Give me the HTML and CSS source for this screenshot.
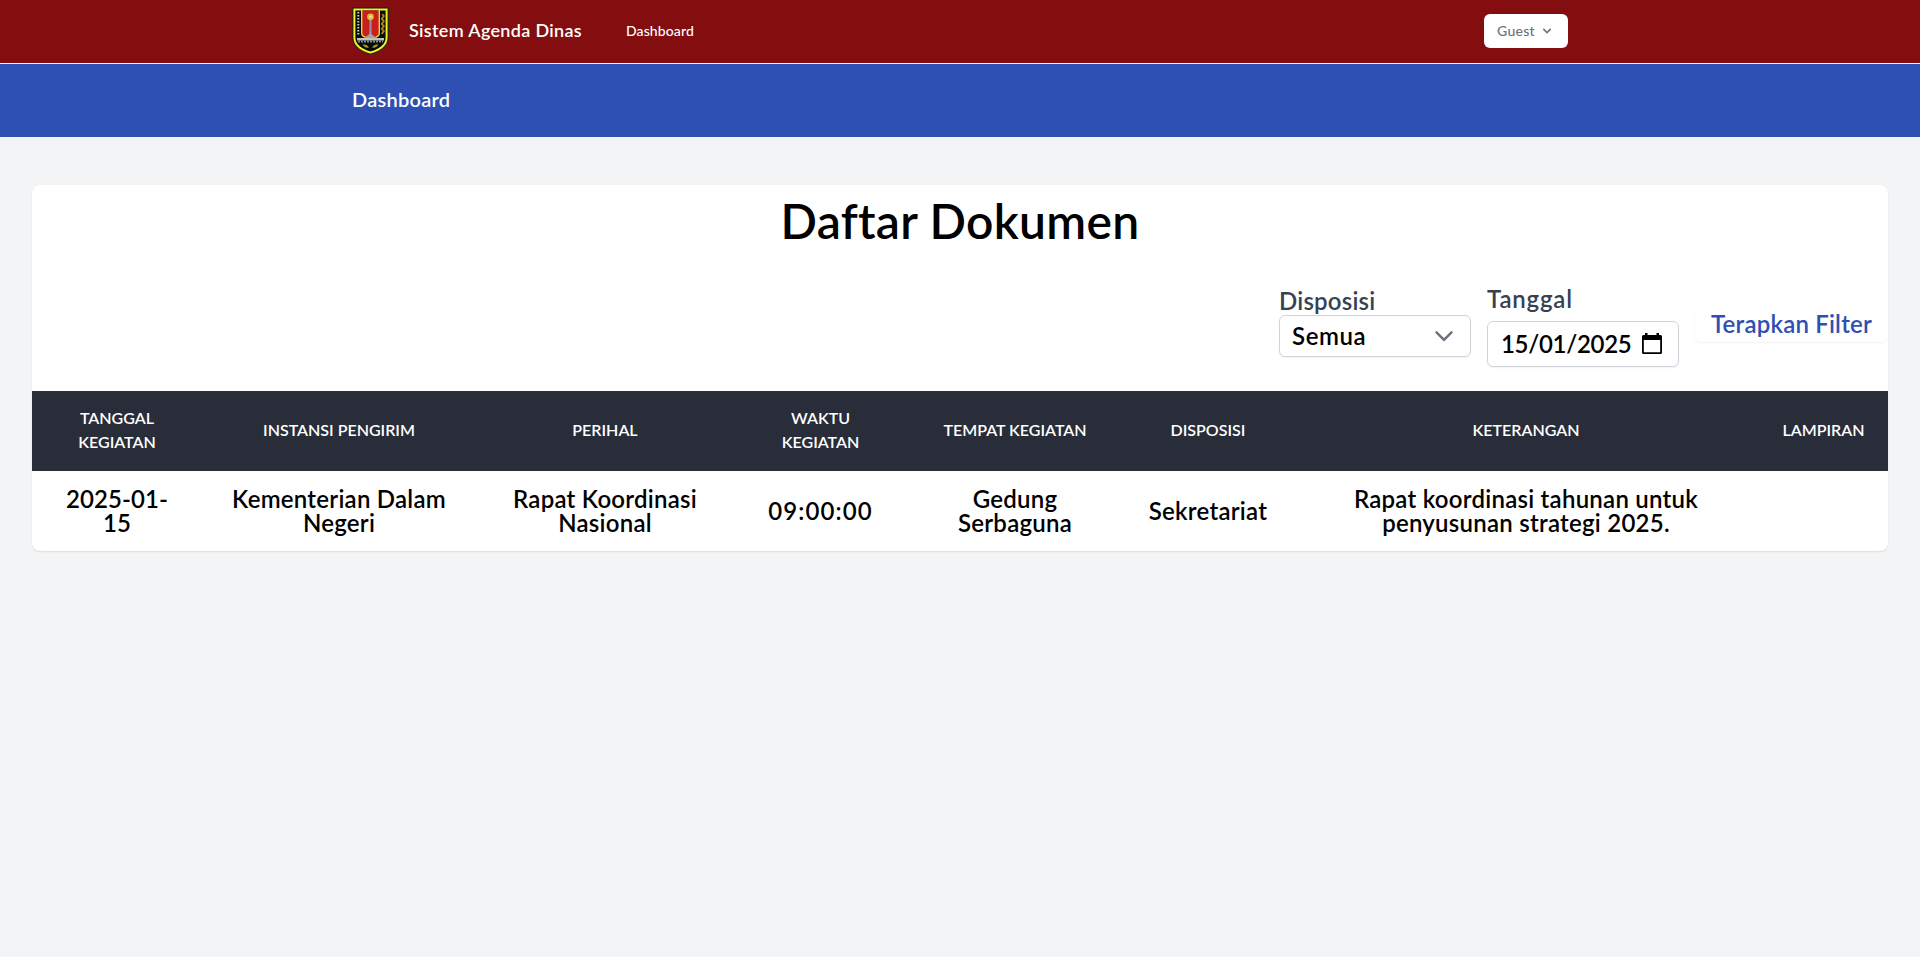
FILE: index.html
```html
<!DOCTYPE html>
<html lang="id">
<head>
<meta charset="utf-8">
<title>Sistem Agenda Dinas</title>
<link rel="stylesheet" href="styles.css">
</head>
<body>
<nav class="navbar">
  <div class="container navbar-inner">
    <svg class="logo" viewBox="0 0 37 48" width="37" height="48">
      <path d="M.7.7h35.6v29.800c0 8.800-8 14-17.800 16.800C8.700 44.500.7 39.300.7 30.500z" fill="#111408" stroke="#272b08" stroke-width="1"/>
      <path d="M2.400 2.400h32.200v28c0 7.700-7 12.400-16.100 15.100C9.400 42.800 2.400 38.100 2.400 30.400z" fill="#080c0b" stroke="#f5ee29" stroke-width="2"/>
      <path d="M9.700 3.500h17.600v22.700c0 2.500-2 4.300-4 4.300H13.700c-2 0-4-1.800-4-4.300z" fill="#c91f20"/>
      <path d="M9.700 3v23c0 2 1.500 3.500 3.500 4M27.300 3v23c0 2-1.500 3.500-3.500 4" fill="none" stroke="#eee52d" stroke-width="1.300"/>
      <path d="M6.300 5v23" stroke="#c1d7cf" stroke-width="2" stroke-dasharray="1.500 1.500"/>
      <path d="M30.300 7l1.500 2-2 3 2 2-2 3 2 2-2 3 2 2-2 3" fill="none" stroke="#a88722" stroke-width="1.800"/>
      <path d="M18.500 13v13" stroke="#8e9294" stroke-width="2.200"/>
      <path d="M18.500 24c0 4-3 5-6 7h12c-3-2-6-3-6-7z" fill="#a3a6a7" stroke="#a3a6a7"/>
      <circle cx="18.500" cy="9.800" r="3.400" fill="#d7bd38"/>
      <circle cx="18.500" cy="9.800" r="1.300" fill="#f3ea8a"/>
      <path d="M5 31h27v2.500H5z" fill="#bfc1c1"/>
      <path d="M6 34.500h25" stroke="#85898a" stroke-width="1.800" stroke-dasharray="2 1"/>
      <path d="M10.500 37.500c3-.5 5 .5 6.500 3-3.500.5-5-.500-6.500-3zM26.500 37.500c-3-.5-5 .5-6.500 3 3.500.5 5-.500 6.500-3z" fill="#a99a27"/>
    </svg>
    <span class="brand">Sistem Agenda Dinas</span>
    <a class="nav-link">Dashboard</a>
    <button class="user-menu"><span>Guest</span>
      <svg viewBox="0 0 20 20" width="16" height="16" fill="currentColor"><path fill-rule="evenodd" d="M5.293 7.293a1 1 0 011.414 0L10 10.586l3.293-3.293a1 1 0 111.414 1.414l-4 4a1 1 0 01-1.414 0l-4-4a1 1 0 010-1.414z"/></svg>
    </button>
  </div>
</nav>
<header class="page-header"><div class="container"><h2 class="page-title">Dashboard</h2></div></header>
<main class="card">
  <h1 class="card-title">Daftar Dokumen</h1>
  <form class="filters">
    <div class="field">
      <div class="label label-disposisi">Disposisi</div>
      <div class="control select"><span class="select-value">Semua</span>
        <svg viewBox="0 0 24 24" width="24" height="24" fill="none" stroke="#6b7280" stroke-width="2.500" stroke-linecap="round" stroke-linejoin="round"><path d="M4.500 8.300L12 15.800l7.500-7.500"/></svg>
      </div>
    </div>
    <div class="field">
      <div class="label label-tanggal">Tanggal</div>
      <div class="control date"><span class="date-value">15/01/2025</span>
        <svg viewBox="0 0 20 22" width="20" height="22"><path d="M3 0h2.500v2h9V0H17v2h1.500Q20 2 20 3.500v16q0 1.500-1.500 1.500h-17Q0 21 0 19.500v-16Q0 2 1.500 2H3zM1.800 7v12.200h16.400V7z" fill-rule="evenodd"/></svg>
      </div>
    </div>
    <button class="apply" type="button"><span>Terapkan Filter</span></button>
  </form>
  <table class="table">
    <colgroup><col class="c1"><col class="c2"><col class="c3"><col class="c4"><col class="c5"><col class="c6"><col class="c7"><col class="c8"></colgroup>
    <thead><tr><th>Tanggal<br>Kegiatan</th><th>Instansi Pengirim</th><th>Perihal</th><th>Waktu<br>Kegiatan</th><th>Tempat Kegiatan</th><th>Disposisi</th><th>Keterangan</th><th>Lampiran</th></tr></thead>
    <tbody><tr><td class="day">2025-01-<br>15</td><td>Kementerian Dalam<br>Negeri</td><td>Rapat Koordinasi<br>Nasional</td><td class="time">09:00:00</td><td>Gedung<br>Serbaguna</td><td>Sekretariat</td><td>Rapat koordinasi tahunan untuk<br>penyusunan strategi 2025.</td><td></td></tr></tbody>
  </table>
</main>
</body>
</html>
```
FILE: styles.css
```css
* { box-sizing: border-box; }
body { margin: 0; min-height: 100vh; background: #f3f4f6; color: #000; font-family: Lato, "Open Sans", sans-serif; font-weight: 600; }
h1, h2 { margin: 0; font-weight: 600; }
button { font: inherit; border: 0; }
.container { width: 1280px; margin: 0 auto; padding: 0 32px; }
.navbar { height: 64px; background: #840d0f; border-bottom: 1px solid #f3f4f6; }
.navbar-inner { display: flex; align-items: center; height: 62px; color: #fff; white-space: nowrap; }
.logo { flex: none; }
.brand { width: 217px; margin-left: 20px; padding-bottom: 2px; font-size: 18px; letter-spacing: .32px; }
.nav-link { padding-bottom: 2px; font-size: 14px; font-weight: 500; letter-spacing: .1px; }
.user-menu { display: flex; align-items: center; gap: 4px; width: 84px; height: 34px; margin-left: auto; padding: 0 12px 0 13px; border-radius: 6px; background: #fff; color: #6b7280; font-size: 14px; font-weight: 500; letter-spacing: .3px; }
.user-menu span { padding-bottom: 2px; }
.user-menu svg { flex: none; }
.page-header { height: 73px; background: #2d50b2; color: #fff; }
.page-title { padding-top: 23px; font-size: 20px; line-height: 25px; letter-spacing: .25px; }
.card { width: 1856px; margin: 48px auto 0; overflow: hidden; border-radius: 8px; background: #fff; box-shadow: 0 1px 2px rgba(0,0,0,.1); }
.card-title { padding-top: 12px; font-size: 48px; line-height: 48px; text-align: center; letter-spacing: .3px; }
.filters { display: flex; align-items: flex-start; justify-content: flex-end; gap: 16px; height: 146px; padding-top: 40px; font-size: 24px; white-space: nowrap; }
.field { width: 192px; }
.label { color: #374151; line-height: 30px; }
.label-disposisi { padding-top: 1px; margin-bottom: -1px; letter-spacing: .2px; }
.label-tanggal { margin-top: -1px; margin-bottom: 7px; letter-spacing: .8px; }
.control { display: flex; align-items: center; justify-content: space-between; border: 1px solid #d1d5db; border-radius: 6px; background: #fff; box-shadow: 0 1px 2px rgba(0,0,0,.05); }
.control span { padding-bottom: 2px; }
.select { height: 42px; padding: 0 14px 0 12px; }
.select-value { letter-spacing: .6px; }
.date { height: 46px; padding: 0 16px 0 13px; }
.date-value { letter-spacing: -.3px; }
.apply { width: 193px; height: 36px; margin-top: 21px; padding: 0 0 2px; border-radius: 6px; background: #fff; color: #2d50b2; box-shadow: 0 1px 2px rgba(0,0,0,.05); letter-spacing: .2px; }
.table { width: 100%; table-layout: fixed; border-collapse: collapse; text-align: center; white-space: nowrap; }
.table th { height: 80px; padding: 0 0 2px; background: #282d39; color: #fff; font-size: 16px; line-height: 24px; font-weight: 600; text-transform: uppercase; }
.table td { height: 80px; padding: 0; font-size: 24px; line-height: 24px; letter-spacing: .25px; }
.table .day { letter-spacing: .1px; }
.table .time { letter-spacing: 1.1px; }
.c1 { width: 170px; }
.c2 { width: 274px; }
.c3 { width: 258px; }
.c4 { width: 173px; }
.c5 { width: 216px; }
.c6 { width: 170px; }
.c7 { width: 466px; }
.c8 { width: 129px; }
```
